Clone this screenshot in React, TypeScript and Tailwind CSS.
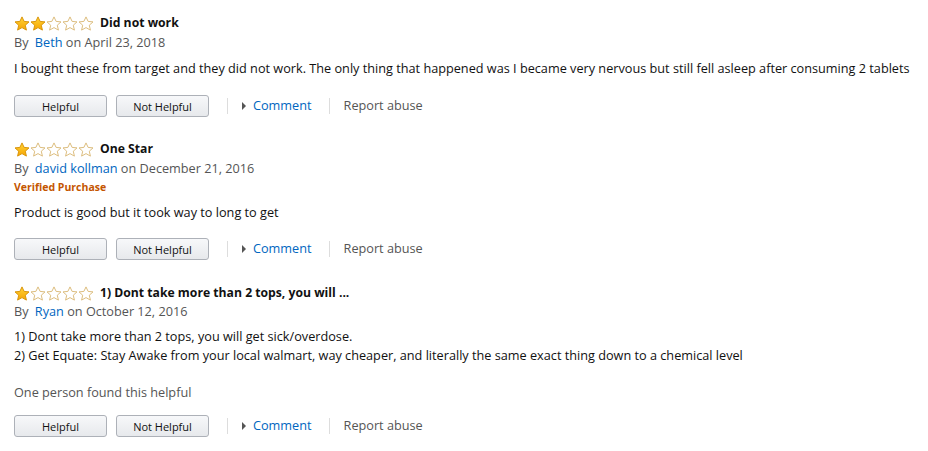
import React from "react";

const Star = ({ filled }: { filled: boolean }) => (
  <svg width="16" height="15" viewBox="0 0 16 15" className="block">
    <defs>
      <linearGradient id="sg" x1="0" y1="0" x2="0" y2="1">
        <stop offset="0" stopColor="#ffd438" />
        <stop offset="1" stopColor="#f6a400" />
      </linearGradient>
    </defs>
    <polygon
      points="8,0.9 10.1,5.4 15,5.9 11.3,9.2 12.4,14.1 8,11.6 3.6,14.1 4.7,9.2 1,5.9 5.9,5.4"
      fill={filled ? "url(#sg)" : "#ffffff"}
      stroke={filled ? "#d9950a" : "#dcbd7e"}
      strokeWidth="1"
      strokeLinejoin="round"
    />
  </svg>
);

const Stars = ({ n }: { n: number }) => (
  <div className="flex w-[81px] shrink-0">
    {[0, 1, 2, 3, 4].map((i) => (
      <Star key={i} filled={i < n} />
    ))}
  </div>
);

const Actions = ({ mt }: { mt: string }) => (
  <div className={`flex items-center ${mt}`}>
    <button className="w-[93px] h-[22px] rounded-[3px] border border-[#adb1b8] bg-gradient-to-b from-[#f7f8fa] to-[#e7e9ec] text-[11px] text-[#111] leading-none">
      Helpful
    </button>
    <button className="ml-[9px] w-[93px] h-[22px] rounded-[3px] border border-[#adb1b8] bg-gradient-to-b from-[#f7f8fa] to-[#e7e9ec] text-[11px] text-[#111] leading-none">
      Not Helpful
    </button>
    <div className="ml-[18px] w-px h-[16px] bg-[#dddddd]" />
    <span className="ml-[14px] w-0 h-0 border-y-[4px] border-y-transparent border-l-[4px] border-l-[#555]" />
    <span className="ml-[7px] text-[12.7px] text-[#0066c0]">Comment</span>
    <div className="ml-[17px] w-px h-[16px] bg-[#dddddd]" />
    <span className="ml-[14px] text-[12.7px] text-[#555]">Report abuse</span>
  </div>
);

export default function App() {
  return (
    <div
      className="w-[928px] h-[451px] bg-white pl-[14px] pt-[14px] text-[#111] text-[12.7px]"
      style={{ fontFamily: '"Open Sans", "Liberation Sans", sans-serif' }}
    >
      {/* Review 1 */}
      <div>
        <div className="flex items-center h-[19px]">
          <Stars n={2} />
          <span className="ml-[5px] font-bold text-[12.2px]">Did not work</span>
        </div>
        <div className="h-[19px] leading-[19px] text-[#555]">
          By <span className="ml-[3px] text-[#0066c0]">Beth</span> on April 23, 2018
        </div>
        <div className="mt-[7px] leading-[19px] whitespace-nowrap">
          I bought these from target and they did not work. The only thing that happened was I became very nervous but still fell asleep after consuming 2 tablets
        </div>
        <Actions mt="mt-[17px]" />
      </div>

      {/* Review 2 */}
      <div className="mt-[23px]">
        <div className="flex items-center h-[19px]">
          <Stars n={1} />
          <span className="ml-[5px] font-bold text-[12.2px]">One Star</span>
        </div>
        <div className="h-[19px] leading-[19px] text-[#555]">
          By <span className="ml-[3px] text-[#0066c0]">david kollman</span> on December 21, 2016
        </div>
        <div className="h-[18px] leading-[18px] text-[10.5px] font-bold text-[#c45500]">
          Verified Purchase
        </div>
        <div className="mt-[7px] leading-[19px]">
          Product is good but it took way to long to get
        </div>
        <Actions mt="mt-[16px]" />
      </div>

      {/* Review 3 */}
      <div className="mt-[24px]">
        <div className="flex items-center h-[19px]">
          <Stars n={1} />
          <span className="ml-[5px] font-bold text-[12.2px]">1) Dont take more than 2 tops, you will ...</span>
        </div>
        <div className="-mt-px h-[19px] leading-[19px] text-[#555]">
          By <span className="ml-[3px] text-[#0066c0]">Ryan</span> on October 12, 2016
        </div>
        <div className="mt-[6px] leading-[19px]">
          <div>1) Dont take more than 2 tops, you will get sick/overdose.</div>
          <div>2) Get Equate: Stay Awake from your local walmart, way cheaper, and literally the same exact thing down to a chemical level</div>
        </div>
        <div className="mt-[18px] leading-[19px] text-[#555]">One person found this helpful</div>
        <Actions mt="mt-[13px]" />
      </div>
    </div>
  );
}
